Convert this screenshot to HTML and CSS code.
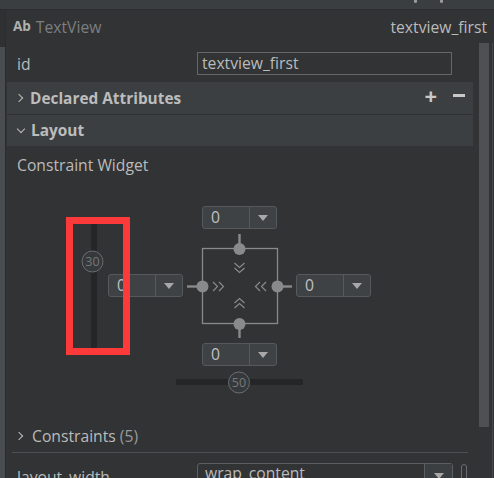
FILE: index.html
```html
<!DOCTYPE html>
<html>
<head>
<meta charset="utf-8">
<link rel="stylesheet" href="styles.css">
</head>
<body>
<div class="topbar"><span class="tb-dot d1"></span><span class="tb-dot d2"></span></div>
<div class="main">
  <div class="leftstrip"><div class="ls-top"></div><div class="ls-bottom"></div></div>
  <div class="content">
    <div class="header">
      <div class="h-left"><span class="ab">Ab</span><span class="h-type">TextView</span></div>
      <div class="h-right">textview_first</div>
    </div>
    <div class="body">
      <div class="panel">
        <div class="row id-row">
          <span class="label">id</span>
          <div class="input">textview_first</div>
        </div>
        <div class="section sec-first">
          <span class="chev-r"></span><span class="sec-title">Declared Attributes</span>
          <span class="sec-actions"><span class="plus">+</span><span class="minus"></span></span>
        </div>
        <div class="section sec-second">
          <span class="chev-d"></span><span class="sec-title">Layout</span>
        </div>
        <div class="cw-title">Constraint Widget</div>
        <div class="canvas">
          <svg class="diagram" width="472" height="236" viewBox="6 184 472 236">
            <rect x="91" y="224" width="6" height="125" fill="#242627"/>
            <circle cx="92.5" cy="261.5" r="10.5" fill="#36393b" stroke="#6b6e70" stroke-width="1"/>
            <text x="92.5" y="266" text-anchor="middle" class="knob-t">30</text>
            <rect x="176" y="379" width="127" height="6" rx="1" fill="#242627"/>
            <circle cx="239" cy="382.5" r="10.5" fill="#36393b" stroke="#6b6e70" stroke-width="1"/>
            <text x="239" y="387" text-anchor="middle" class="knob-t">50</text>
            <rect x="202.5" y="248.5" width="75" height="75" fill="none" stroke="#8a8a8a" stroke-width="1.3"/>
            <g stroke="#8a8a8a" stroke-width="2.4">
              <line x1="239.5" y1="234" x2="239.5" y2="249"/>
              <line x1="239.5" y1="324" x2="239.5" y2="338"/>
              <line x1="187" y1="286.5" x2="202" y2="286.5"/>
              <line x1="277" y1="286.5" x2="292" y2="286.5"/>
            </g>
            <g fill="#8a8a8a">
              <circle cx="239.5" cy="249" r="6"/>
              <circle cx="239.5" cy="324" r="6"/>
              <circle cx="202.5" cy="286.5" r="6"/>
              <circle cx="277.5" cy="286.5" r="6"/>
            </g>
            <g fill="none" stroke="#8a8a8a" stroke-width="1.2">
              <polyline points="234.5,263 239.5,267.5 244.5,263"/>
              <polyline points="234.5,268 239.5,272.5 244.5,268"/>
              <polyline points="213,282 217.5,286.5 213,291"/>
              <polyline points="219,282 223.5,286.5 219,291"/>
              <polyline points="266,282 261.5,286.5 266,291"/>
              <polyline points="260,282 255.5,286.5 260,291"/>
              <polyline points="234.5,303 239.5,298.5 244.5,303"/>
              <polyline points="234.5,308 239.5,303.5 244.5,308"/>
            </g>
          </svg>
          <div class="dd dd-top"><span class="dd-val">0</span><span class="dd-btn"><span class="tri"></span></span></div>
          <div class="dd dd-left"><span class="dd-val">0</span><span class="dd-btn"><span class="tri"></span></span></div>
          <div class="dd dd-right"><span class="dd-val">0</span><span class="dd-btn"><span class="tri"></span></span></div>
          <div class="dd dd-bottom"><span class="dd-val">0</span><span class="dd-btn"><span class="tri"></span></span></div>
          <div class="highlight"></div>
        </div>
        <div class="cons-row"><span class="chev-r thin"></span><span class="cons-title">Constraints <span class="count">(5)</span></span></div>
        <div class="sep"></div>
        <div class="row lw-row">
          <span class="label">layout_width</span>
          <div class="select"><span class="sel-val">wrap_content</span><span class="sel-btn"><span class="tri"></span></span></div>
          <span class="pill"></span>
        </div>
      </div>
      <div class="scrollcol"><div class="thumb"></div></div>
    </div>
  </div>
</div>
</body>
</html>
```
FILE: styles.css
```css
* { box-sizing: border-box; }
html, body { margin: 0; padding: 0; }
body {
  width: 494px;
  height: 478px;
  overflow: hidden;
  background: #313335;
  color: #bbbbbb;
  font-family: "Open Sans", "Noto Sans", sans-serif;
  font-size: 15.7px;
}
.topbar {
  height: 10px;
  background: #3b3e40;
  border-bottom: 1px solid #2b2d2f;
  position: relative;
}
.tb-dot {
  position: absolute;
  top: 0;
  width: 3px;
  height: 3px;
  background: #9a9a9a;
  border-radius: 0 0 2px 2px;
}
.d1 { left: 414px; }
.d2 { left: 440px; }
.main {
  display: flex;
  height: 468px;
  overflow: hidden;
}
.leftstrip {
  width: 6px;
  flex-shrink: 0;
  display: flex;
  flex-direction: column;
  border-right: 1px solid #2a2c2e;
}
.ls-top { height: 37px; background: #2e3032; }
.ls-bottom { flex: 1; background: #4a4d4f; }
.content {
  flex: 1;
  display: flex;
  flex-direction: column;
  min-height: 0;
}
.content > *, .panel > * { flex-shrink: 0; }
.header {
  height: 33px;
  display: flex;
  align-items: center;
  justify-content: space-between;
  padding: 1px 7px 0 7px;
}
.ab { font-weight: 700; color: #b0b0b0; font-size: 13.5px; margin-right: 5px; position: relative; top: -2px; }
.h-type { color: #7c7f82; }
.h-right { color: #bbbbbb; }
.body {
  flex: 1 1 auto;
  min-height: 0;
  display: flex;
  overflow: hidden;
}
.panel {
  width: 472px;
  flex-shrink: 0;
  display: flex;
  flex-direction: column;
}
.row {
  display: flex;
  align-items: center;
}
.label { width: 191px; padding-left: 11px; }
.id-row { height: 39px; padding-top: 2px; }
.input {
  width: 255px;
  height: 23px;
  border: 1px solid #646668;
  padding-left: 4px;
  line-height: 20px;
}
.section {
  margin: 0 5px 0 1px;
  height: 32px;
  background: #3c3f41;
  display: flex;
  align-items: center;
  position: relative;
}
.sec-first { border-bottom: 1px solid #2f3133; height: 33px; }
.sec-second { height: 31px; }
.sec-title { font-weight: 700; font-size: 15.4px; color: #bcbcbc; }
.chev-r, .chev-d {
  width: 6px; height: 6px;
  border-right: 1.5px solid #bbbbbb;
  border-bottom: 1.5px solid #bbbbbb;
  display: inline-block;
}
.chev-r { transform: rotate(-45deg); margin: 0 8px 0 9px; }
.chev-d { transform: rotate(45deg); margin: -4px 7px 0 11px; }
.sec-actions {
  position: absolute;
  right: 8px;
  top: 4px;
  display: flex;
  align-items: center;
  gap: 16px;
}
.plus { font-weight: 700; font-size: 22px; line-height: 18px; color: #c8c8c8; }
.minus { width: 12px; height: 3px; background: #c8c8c8; }
.cw-title { height: 38px; padding-left: 11px; display: flex; align-items: center; }
.canvas {
  position: relative;
  height: 236px;
}
.diagram { position: absolute; left: 0; top: 0; }
.knob-t { font-family: "Open Sans", sans-serif; font-size: 12.5px; fill: #75787a; }
.dd {
  position: absolute;
  width: 75px;
  height: 23px;
  display: flex;
  border: 1px solid #56595b;
  border-radius: 3px;
  background: #3f4244;
}
.dd-val { width: 46px; padding-left: 8px; line-height: 20px; color: #c0c0c0; }
.dd-btn {
  flex: 1;
  border-left: 1px solid #56595b;
  display: flex;
  align-items: center;
  justify-content: center;
}
.tri {
  width: 0; height: 0;
  border-left: 5px solid transparent;
  border-right: 5px solid transparent;
  border-top: 6px solid #a8a8a8;
}
.dd-top { left: 196px; top: 22px; }
.dd-left { left: 102px; top: 90px; }
.dd-right { left: 290px; top: 90px; }
.dd-bottom { left: 196px; top: 159px; }
.highlight {
  position: absolute;
  left: 60px;
  top: 33px;
  width: 64px;
  height: 138px;
  border: 7px solid #fd3a3a;
}
.cons-row { height: 32px; display: flex; align-items: center; }
.chev-r.thin { margin: 0 10px 0 10px; }
.cons-title { color: #bbbbbb; }
.count { color: #9a9a9a; }
.sep { margin-left: 6px; width: 456px; height: 1px; background: #4c4f51; }
.lw-row { padding-top: 10px; align-items: flex-start; }
.lw-row .label { padding-top: 3px; }
.select {
  width: 256px;
  height: 24px;
  border: 1px solid #5c5f61;
  border-radius: 3px 3px 0 0;
  display: flex;
  background: #313335;
}
.sel-val { flex: 1; padding-left: 7px; line-height: 18px; }
.sel-btn { width: 28px; border-left: 1px solid #5c5f61; display: flex; justify-content: center; padding-top: 9px; background: #3c3f41; }
.pill { width: 6px; height: 20px; border: 1px solid #6a6d6f; border-radius: 3px; margin: 1px 0 0 8px; }
.scrollcol {
  flex: 1;
  position: relative;
}
.thumb {
  position: absolute;
  left: 1px;
  top: 0;
  width: 10px;
  height: 384px;
  background: #4d5153;
}
.scrollcol::after {
  content: "";
  position: absolute;
  right: 1px;
  top: 0;
  bottom: 0;
  width: 1px;
  background: #45484a;
}
```
